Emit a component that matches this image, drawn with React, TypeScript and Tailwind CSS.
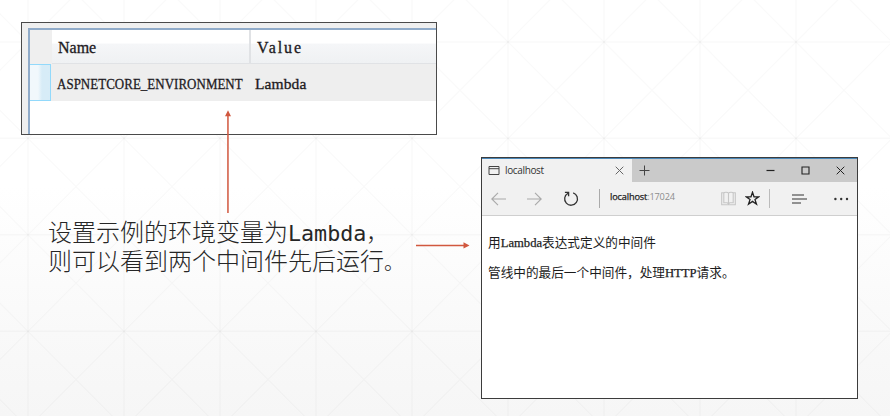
import React from "react";

const GRID_X = [-68, 28, 124, 220, 316, 412, 508, 604, 700, 796, 892];
const GRID_Y = [-54.5, 42, 138.3, 234.8, 331.3];

function Backdrop() {
  return (
    <svg className="absolute inset-0 h-full w-full" viewBox="0 0 890 416" fill="none" stroke="#000" strokeOpacity="0.024" strokeWidth="1.5">
      {GRID_X.map((x) => (
        <path key={x} d={`M${x} 0V416`} />
      ))}
      {GRID_Y.map((y) => (
        <path key={y} d={`M0 ${y}H890`} />
      ))}
      {GRID_X.flatMap((x) =>
        GRID_Y.map((y) => <path key={`${x}/${y}`} d={`M${x} ${y}l96 96.5M${x + 96} ${y}l-96 96.5`} strokeWidth="1.2" />),
      )}
    </svg>
  );
}

function VariablesTable() {
  return (
    <div className="h-[113px] w-[416px] border-[1.5px] border-[#4a4a4a] bg-[#efefef] pt-[5px] pl-[6px]">
      <div className="h-full border-t-2 border-l-2 border-[#90abc9] bg-white font-['Liberation_Serif',serif] text-[15.5px] text-[#1d1a22] [-webkit-text-stroke:0.3px_#1d1a22]">
        <div className="flex h-[34px]">
          <div className="w-[22px] bg-[#efefef]" />
          <div className="flex w-[199px] items-center border-r-2 border-b border-[#e0e2e5] bg-linear-to-b from-white from-40% via-[#f5f6f8] via-42% to-[#eff1f3] pt-[3px] pl-[6px] text-[16px]">
            Name
          </div>
          <div className="flex flex-1 items-center border-b border-[#e0e2e5] bg-linear-to-b from-white from-40% via-[#f5f6f8] via-42% to-[#eff1f3] pt-[3px] pl-[6px] text-[16px] tracking-[1.9px]">
            Value
          </div>
        </div>
        <div className="flex h-[37px] items-center bg-[#eeeeee]">
          <div className="h-full w-[21px] border-y-[1.5px] border-r-[1.5px] border-[#92d9fb] bg-linear-to-r from-[#f1f8fc] from-40% to-[#d7ecf7] to-60%" />
          <div className="w-[198px] pt-[3px] pl-[6px]">
            <span className="inline-block origin-left scale-x-[0.835] tracking-[0.05px] whitespace-nowrap">ASPNETCORE_ENVIRONMENT</span>
          </div>
          <div className="pt-[3px] pl-[6px] tracking-[0.1px]">Lambda</div>
        </div>
      </div>
    </div>
  );
}

function Browser() {
  return (
    <div className="flex h-[242px] w-[377px] flex-col border-[1.5px] border-[#3c3c3c] bg-white font-['Open_Sans','Noto_Sans',sans-serif]">
      <div className="h-px shrink-0 bg-[#4a87b8]" />
      <div className="flex h-[23px] shrink-0 bg-[#cacaca] text-[#333]">
        <div className="flex w-[150px] items-center bg-[#f1f1f1] pl-[6px]">
          <svg width="12" height="11" viewBox="0 0 12 11" fill="none" stroke="#444">
            <path d="M1 1.5h10v8H1zM1 3.7h10" />
          </svg>
          <span className="ml-[5px] w-[110px] text-[10px] tracking-[-0.35px]">localhost</span>
          <svg width="9" height="9" viewBox="0 0 9 9" stroke="#666">
            <path d="M.7.7l7.6 7.6M8.3.7L.7 8.3" />
          </svg>
        </div>
        <div className="flex flex-1 items-center pl-[7px]">
          <svg width="11" height="11" viewBox="0 0 11 11" stroke="#444">
            <path d="M.5 5.5h10M5.5.5v10" />
          </svg>
          <div className="ml-auto flex items-center gap-[26px] pr-[12px]">
            <svg width="9" height="9" viewBox="0 0 9 9" stroke="#222" strokeWidth="1.2">
              <path d="M.5 4.5h8" />
            </svg>
            <svg width="9" height="9" viewBox="0 0 9 9" fill="none" stroke="#222" strokeWidth="1.1">
              <path d="M1 1h7v7H1z" />
            </svg>
            <svg width="9" height="9" viewBox="0 0 9 9" stroke="#222">
              <path d="M.7.7l7.6 7.6M8.3.7L.7 8.3" />
            </svg>
          </div>
        </div>
      </div>
      <div className="flex h-[34px] shrink-0 items-center border-b border-[#cfcfcf] bg-[#f1f1f1] pl-[9px]">
        <svg width="15" height="14" viewBox="0 0 15 14" fill="none" stroke="#a9a9a9" strokeWidth="1.1">
          <path d="M15 7H1M7 .8L.8 7 7 13.2" />
        </svg>
        <svg className="ml-[21px]" width="15" height="14" viewBox="0 0 15 14" fill="none" stroke="#a9a9a9" strokeWidth="1.1">
          <path d="M0 7h14M8 .8L14.2 7 8 13.2" />
        </svg>
        <svg className="ml-[21px]" width="16" height="16" viewBox="0 0 16 16" fill="none" stroke="#333" strokeWidth="1.3">
          <path d="M10.2 1.8A6.4 6.4 0 1 1 5 2.2M1.9 1.4h3.7v3.8" />
        </svg>
        <div className="ml-[20px] h-[19px] w-px bg-[#aaa]" />
        <div className="mt-[-3px] ml-[10px] w-[111px] text-[9.2px] tracking-[-0.15px] text-[#222]">
          <span className="[-webkit-text-stroke:0.25px_#222]">localhost</span>
          <span className="text-[#8d8d8d]">:17024</span>
        </div>
        <svg width="15" height="15" viewBox="0 0 15 15" fill="none" stroke="#c6c6c6" strokeWidth="1.1">
          <path d="M7.5 2.2C6.5 1 3.5 1 2.8 1.8H.7v12h13.6v-12h-2.1C11.5 1 8.5 1 7.5 2.2v11M2.8 2v9.7h3.4l1.3 1 1.3-1h3.4V2" />
        </svg>
        <svg className="ml-[9px]" width="15" height="15" viewBox="0 0 15 15" fill="none" stroke="#222" strokeWidth="1.3">
          <path d="M7.5 1.3l1.5 4.5h4.8L10 8.6l1.5 4.6-4-2.8-4 2.8L5 8.6 1.2 5.8H6z" />
        </svg>
        <div className="ml-[9px] h-[19px] w-px bg-[#bbb]" />
        <svg className="ml-[22px]" width="15" height="10" viewBox="0 0 15 10" stroke="#333" strokeWidth="1.2">
          <path d="M0 1h12M0 5h15M0 9h9" />
        </svg>
        <svg className="ml-[27px] shrink-0" width="15" height="4" viewBox="0 0 15 4" fill="#333">
          <circle cx="1.4" cy="2" r="1.2" />
          <circle cx="7.2" cy="2" r="1.2" />
          <circle cx="13" cy="2" r="1.2" />
        </svg>
      </div>
      <div className="flex flex-col gap-[10px] pt-[17px] pl-[6px] font-['Liberation_Serif','Noto_Sans_CJK_SC',serif] text-[12.65px] leading-[20px] text-[#1c1c1c]">
        <p>
          用<span className="[-webkit-text-stroke:0.25px_#1c1c1c]">Lambda</span>表达式定义的中间件
        </p>
        <p>
          管线中的最后一个中间件，处理<span className="[-webkit-text-stroke:0.25px_#1c1c1c]">HTTP</span>请求。
        </p>
      </div>
    </div>
  );
}

function Arrows() {
  return (
    <svg className="pointer-events-none absolute inset-0 h-full w-full" viewBox="0 0 890 416" fill="#d1583f" stroke="none">
      <path d="M227.2 115h1.5v98h-1.5zM225 116.2l3-6 3 6z" />
      <path d="M416 244.7h48v1.5h-48zM463.5 242.3l6 3.1-6 3.1z" />
    </svg>
  );
}

export default function App() {
  return (
    <main className="relative flex h-[416px] w-[890px] overflow-hidden bg-linear-to-b from-white from-45% via-[#f9f9f9] via-80% to-[#f6f6f6]">
      <Backdrop />
      <section className="relative w-[481px] shrink-0 pt-[22px] pl-[21px]">
        <VariablesTable />
        <p className="mt-[84px] ml-[27px] font-['DejaVu_Sans_Mono','Noto_Sans_CJK_SC',monospace] text-[24px] leading-[28px] font-light whitespace-nowrap text-[#262626]">
          设置示例的环境变量为<span className="text-[21.7px]">Lambda，</span>
          <br />
          则可以看到两个中间件先后运行<span className="text-[20px]">。</span>
        </p>
      </section>
      <section className="relative pt-[157px]">
        <Browser />
      </section>
      <Arrows />
    </main>
  );
}
